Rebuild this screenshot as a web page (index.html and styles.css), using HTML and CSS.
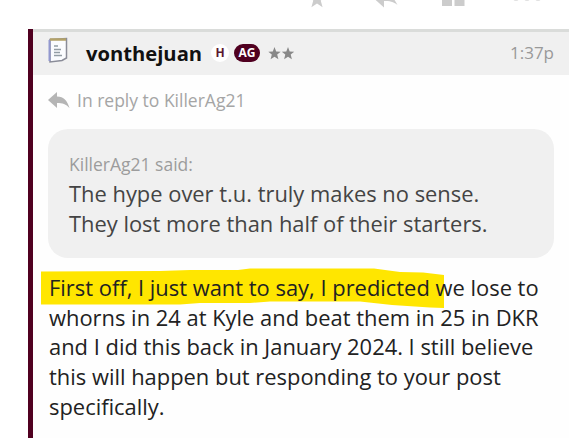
FILE: index.html
```html
<!DOCTYPE html>
<html lang="en">
<head>
    <meta charset="UTF-8">
    <meta name="viewport" content="width=device-width, initial-scale=1.0">
    <title>Forum Thread</title>
    <link rel="stylesheet" href="styles.css">
</head>
<body>
    <div class="actions">
        <svg class="action-star" width="18" height="18" viewBox="0 0 18 18"><path d="M9 0l2.400 6.200 6.300.3-5 4 1.900 6.800L9 13.400l-5.600 3.900 1.900-6.800-5-4 6.300-.3z"/></svg>
        <svg class="action-reply" width="24" height="18" viewBox="0 0 24 18"><path d="M10 0v5c8 0 11 5 13.500 10-4-3.500-8-4-13.500-4v6.500L0 8.500z"/></svg>
        <svg class="action-grid" width="23" height="22" viewBox="0 0 23 22"><path d="M0 0h10v10H0zM12.500 0h10v10h-10zM0 12h10v10H0zM12.500 12h10v10h-10z"/></svg>
        <svg class="action-more" width="28" height="6" viewBox="0 0 28 6"><circle cx="3" cy="3" r="3"/><circle cx="14" cy="3" r="3"/><circle cx="25" cy="3" r="3"/></svg>
    </div>
    <article class="post">
        <header class="post-header">
            <svg class="note-icon" width="20" height="26" viewBox="0 0 20 26">
                <path d="M2 2.500L18.500 1.500V21L14 23.500 2 25z" fill="#fbfcff" stroke="#8a8c98" stroke-width="1.500"/>
                <path d="M1.500 3v21" stroke="#9298cf" stroke-width="2"/>
                <path d="M2 2.500h16" stroke="#b3a269" stroke-width="2.500"/>
                <path d="M6 9h4M6 12.500h7M6 15.500h6M6 18.500h8" stroke="#939da5" stroke-width="1.300"/>
            </svg>
            <span class="username">vonthejuan</span>
            <span class="badge badge-h">H</span>
            <span class="badge badge-ag">AG</span>
            <svg class="stars" width="27" height="13" viewBox="0 0 27 13"><path d="M6.500 0l1.700 4.500 4.500.2-3.500 2.900 1.200 4.700-3.900-2.600-3.900 2.600 1.200-4.700L.3 4.700l4.500-.2zM20 0l1.700 4.500 4.500.2-3.500 2.900 1.200 4.700-3.900-2.600-3.900 2.600 1.200-4.700-3.500-2.900 4.500-.2z"/></svg>
            <span class="time">1:37p</span>
        </header>
        <div class="post-content">
            <div class="reply-to">
                <svg width="22" height="17" viewBox="0 0 22 17"><path d="M9 0v4.500c7 0 10 4 12.500 11.500-3.500-4-7-5-12.500-5V16L0 8z"/></svg>
                <span>In reply to KillerAg21</span>
            </div>
            <blockquote class="quote">
                <div class="quote-author">KillerAg21 said:</div>
                <p>The hype over t.u. truly makes no sense.<br>They lost more than half of their starters.</p>
            </blockquote>
            <div class="message">
                <!-- marker stroke under the first line -->
                <svg class="marker" width="403" height="40" viewBox="0 0 403 40"><path d="M0 3.500L119 3 149 2H197L209 .5H333L359 4 382 4.500 403 7V40L389 39.500 351 37 319 33.500H229L209 35H159L139 36.500H0z"/></svg>
                <p>First off, I just want to say, I predicted we lose to<br>whorns in 24 at Kyle and beat them in 25 in DKR<br>and I did this back in January 2024. I still believe<br>this will happen but responding to your post<br>specifically.</p>
            </div>
        </div>
    </article>
</body>
</html>
```
FILE: styles.css
```css
* { margin: 0; padding: 0; box-sizing: border-box; }
body {
    width: 576px;
    height: 438px;
    overflow: hidden;
    background-color: #fff;
    font-family: "Open Sans", "Noto Sans", sans-serif;
    color: #222;
}
svg { display: block; flex-shrink: 0; }
.actions {
    height: 29px;
    padding-left: 308px;
    display: flex;
    align-items: flex-start;
    fill: #ccc;
}
.action-star { margin-top: -10px; }
.action-reply { margin: -10px 0 0 48px; }
.action-grid { margin: -16px 0 0 44px; }
.action-more { margin: -5px 0 0 48px; opacity: 0.6; }
.post {
    width: 541px;
    height: 409px;
    margin-left: 28px;
    border-left: 5px solid #500020;
    background-color: #fefefe;
}
.post-header {
    height: 46px;
    padding: 0 15px 2px 15px;
    border-top: 3px solid #dadcda;
    background-color: #f0f0f0;
    display: flex;
    align-items: center;
}
.note-icon { margin-top: -5px; }
.username {
    margin-left: 18px;
    width: 116px;
    font-size: 20.2px;
    font-weight: 700;
    color: #111;
    white-space: nowrap;
}
.badge {
    flex-shrink: 0;
    height: 18px;
    line-height: 18px;
    border-radius: 9px;
    text-align: center;
    font-size: 12px;
    font-weight: 700;
}
.badge-h { margin-left: 9px; width: 18px; background-color: #fff; color: #5a1830; }
.badge-ag { margin-left: 5px; width: 26px; background-color: #500020; color: #fff; }
.stars { margin-left: 8px; margin-top: 1px; fill: #888; }
.time { margin-left: auto; font-size: 17px; color: #999; }
.post-content { padding: 13px 15px 0; }
.reply-to {
    height: 24px;
    display: flex;
    align-items: center;
    gap: 7px;
    font-size: 17.5px;
    color: #a5a5a5;
    fill: #b5b5b5;
    white-space: nowrap;
}
.quote {
    height: 129px;
    margin-top: 17px;
    padding: 22px 20px 0 21px;
    border-radius: 20px;
    background-color: #f0f0f0;
    font-size: 21.9px;
    line-height: 29.5px;
    color: #444;
    white-space: nowrap;
}
.quote-author { margin-bottom: 2px; font-size: 17.5px; line-height: 26px; color: #9c9c9c; }
.message {
    position: relative;
    margin-top: 15px;
    font-size: 21.92px;
    line-height: 29.7px;
    white-space: nowrap;
}
.message p { position: relative; padding-left: 1px; }
.marker { position: absolute; left: -7px; top: -5px; fill: #ffe600; }
```
